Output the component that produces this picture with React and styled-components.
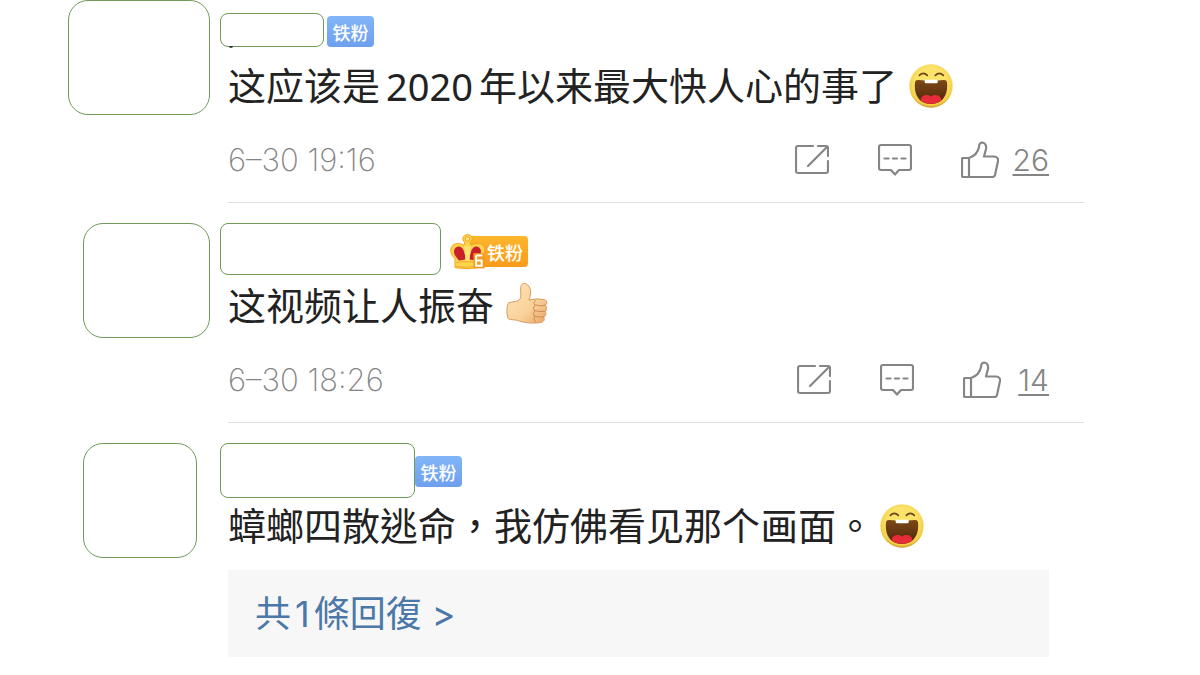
import React from "react";
import styled, { createGlobalStyle } from "styled-components";

const GlobalStyle = createGlobalStyle`
  * {
    box-sizing: border-box;
  }

  body {
    margin: 0;
    background: #fff;
    font-family: Inter, "Noto Sans CJK TC", sans-serif;
  }
`;

const List = styled.main`
  padding: 0 116px 18px 68px;
`;

const Comment = styled.article`
  display: flex;
  gap: 10px;
  padding-top: ${(props) => (props.$first ? "0" : "20px")};
`;

const AvatarColumn = styled.div`
  flex: 0 0 142px;
  padding-left: ${(props) => (props.$wide ? "0" : "15px")};
`;

const Avatar = styled.div`
  width: ${(props) => props.$width}px;
  height: 115px;
  border: 1px solid #6f9a58;
  border-radius: 20px;
`;

const Content = styled.div`
  flex: 1;
  min-width: 0;
  padding-top: ${(props) => (props.$first ? "3px" : "0")};
`;

const Header = styled.header`
  height: 57px;
  display: flex;
  align-items: center;
`;

const NameBox = styled.div`
  position: relative;
  align-self: ${(props) => (props.$compact ? "center" : "flex-start")};
  width: ${(props) => props.$width}px;
  height: ${(props) => props.$height}px;
  margin-bottom: ${(props) => (props.$compact ? "4px" : "0")};
  border: 1px solid #6f9a58;
  border-radius: 8px;
`;

const Speck = styled.span`
  position: absolute;
  left: 8px;
  top: 100%;
  width: 4px;
  height: 2px;
  border-radius: 0 0 2px 2px;
  background: #333;
`;

const Badge = styled.span`
  display: flex;
  align-items: center;
  justify-content: center;
  height: 31px;
  width: 47px;
  margin-left: ${(props) => props.$gap}px;
  border-radius: 4px;
  background: linear-gradient(#82b6f8, #6d9fee);
  color: #fff;
  font-family: "Noto Sans CJK SC", sans-serif;
  font-size: 18px;
  font-weight: 500;
  line-height: 30px;
`;

const GoldBadge = styled(Badge)`
  justify-content: flex-start;
  width: 78px;
  background: linear-gradient(#fdb62c, #f99a1c) right / 60px 100% no-repeat;

  svg {
    flex: none;
    margin-right: 1px;
  }
`;

const Body = styled.div`
  padding-left: 8px;
`;

const Message = styled.p`
  display: flex;
  align-items: center;
  height: 52px;
  margin: 0;
  color: #222;
  font-size: 38px;
  line-height: 52px;
  white-space: nowrap;

  svg {
    flex: none;
    margin-left: ${(props) => props.$gap}px;
  }
`;

const Year = styled.span`
  margin: 0 6px;
  font-family: "Noto Sans", sans-serif;
`;

const Meta = styled.footer`
  display: flex;
  align-items: center;
  justify-content: space-between;
  height: 91px;
  padding: 25px 35px 19px 0;
  border-bottom: 1px solid #e0e0e0;
`;

const Time = styled.time`
  color: #858585;
  font-size: 31px;
  font-weight: 200;
  line-height: 44px;
`;

const Actions = styled.div`
  display: flex;
  align-items: center;
  gap: 49px;
`;

const Action = styled.button`
  display: flex;
  align-items: center;
  gap: 14px;
  padding: 0;
  border: 0;
  background: none;
  color: #858585;
  font-family: inherit;
  font-size: 30px;
  font-weight: 300;
  cursor: pointer;
`;

const Count = styled.span`
  min-width: 34px;
  text-align: right;
  text-decoration: underline;
  text-decoration-thickness: 2px;
  text-underline-offset: 3px;
`;

const Replies = styled.div`
  display: flex;
  align-items: center;
  height: 87px;
  margin: 18px 35px 0 0;
  padding-left: 27px;
  background: #f7f7f7;
`;

const ReplyLink = styled.a`
  color: #4b77a9;
  font-size: 36px;
  line-height: 48px;
  text-decoration: none;
`;

const ReplyCount = styled.span`
  margin: 0 4px;
`;

const LaughIcon = () => (
  <svg width="44" height="44" viewBox="86 39 132 132" aria-label="哈哈">
    <defs>
      <radialGradient id="face" cx="50%" cy="42%" r="58%">
        <stop offset="0.6" stopColor="#fbe36a" />
        <stop offset="0.9" stopColor="#f3cc45" />
        <stop offset="1" stopColor="#c89322" />
      </radialGradient>
      <linearGradient id="mouth" x1="0" y1="0" x2="0" y2="1">
        <stop offset="0" stopColor="#7c4a16" />
        <stop offset="1" stopColor="#4d240c" />
      </linearGradient>
      <clipPath id="mouthClip">
        <path d="M104 94 Q105 86 114 87 Q152 91 190 87 Q199 86 200 94 C204 132 187 159 152 159 C117 159 100 132 104 94 Z" />
      </clipPath>
    </defs>
    <circle cx="152" cy="105" r="65" fill="url(#face)" />
    <path
      d="M104 94 Q105 86 114 87 Q152 91 190 87 Q199 86 200 94 C204 132 187 159 152 159 C117 159 100 132 104 94 Z"
      fill="url(#mouth)"
    />
    <g clipPath="url(#mouthClip)">
      <ellipse cx="139" cy="147" rx="18" ry="15" fill="#e62c38" />
      <ellipse cx="165" cy="147" rx="18" ry="15" fill="#e62c38" />
    </g>
    <path d="M133 86 H172 V94 Q172 97 168 97 H137 Q133 97 133 94 Z" fill="#fff" />
    <path
      d="M117 73 Q129 61 141 73 M165 73 Q177 61 189 73"
      fill="none"
      stroke="#6b4415"
      strokeWidth="5"
      strokeLinecap="round"
    />
  </svg>
);

const PraiseIcon = () => (
  <svg width="42" height="48" viewBox="228 184 126 144" aria-label="赞">
    <defs>
      <linearGradient id="skin" x1="0" y1="0" x2="1" y2="1">
        <stop offset="0" stopColor="#fde6b8" />
        <stop offset="0.6" stopColor="#f9d19b" />
        <stop offset="1" stopColor="#e9a466" />
      </linearGradient>
    </defs>
    <path
      d="M236 246 C246 243 258 244 266 239 C276 231 271 216 272 202 C273 189 281 186 289 190 C299 195 304 209 301 222 Q300 231 297 238 Q322 232 344 237 C352 240 352 250 346 254 C352 260 351 269 345 272 C350 278 348 286 341 289 C345 296 342 303 334 305 C308 310 280 306 262 299 C252 296 242 299 235 294 C229 281 229 258 236 246 Z"
      fill="url(#skin)"
      stroke="#d99a5d"
      strokeWidth="3"
    />
    <path
      d="M346 254 Q331 258 317 253 M345 272 Q330 275 315 270 M341 289 Q328 291 315 286 M317 240 Q307 246 315 254 Q306 263 314 271 Q306 279 314 287 Q309 297 316 304"
      fill="none"
      stroke="#cf8b50"
      strokeWidth="3"
      strokeLinecap="round"
    />
  </svg>
);

const CrownIcon = () => (
  <svg width="36" height="36" viewBox="57 43 109 109" aria-label="6">
    <path
      d="M72 118 C52 100 56 72 80 72 Q92 72 99 77 L102 70 C90 58 97 45 110 45 C123 45 130 58 118 70 L121 77 Q128 72 142 72 C166 72 168 98 150 116 L150 144 Q110 152 72 145 Z"
      fill="#ffd34c"
      stroke="#f1a51f"
      strokeWidth="3"
    />
    <path
      d="M78 116 C62 98 70 80 86 81 Q101 84 104 120 L84 123 Z M142 116 C158 98 150 80 134 81 Q119 84 116 120 L136 123 Z"
      fill="#c7202b"
    />
    <path d="M100 80 H120 L116 123 H104 Z" fill="#ffe373" />
    <circle cx="110" cy="58" r="7" fill="#ffe684" stroke="#eda124" strokeWidth="3" />
    <path d="M76 129 Q105 124 136 129 M75 141 Q105 146 135 141" fill="none" stroke="#e99a1e" strokeWidth="2" />
    <path d="M128 101 H162 V147 H128 Z" fill="#f59b1d" />
    <path d="M155 108 H139 Q136 108 136 111 V139 H153 V123 H137" fill="none" stroke="#fff" strokeWidth="6" />
  </svg>
);

const lineProps = {
  fill: "none",
  stroke: "#858585",
  strokeWidth: 2.2,
  strokeLinecap: "round",
  strokeLinejoin: "round",
};

const ShareIcon = () => (
  <svg width="34" height="36" viewBox="0 0 34 36" {...lineProps}>
    <path d="M18 4 H3 Q1 4 1 6 V29 Q1 31 3 31 H31 Q33 31 33 29 V19" />
    <path d="M23 4 H31 Q33 4 33 6 V14 M32 5 L13 24" />
  </svg>
);

const CommentIcon = () => (
  <svg width="34" height="36" viewBox="0 0 34 36" {...lineProps}>
    <path d="M3 3 H31 Q33 3 33 5 V26 Q33 28 31 28 H21 L17 32.5 L13 28 H3 Q1 28 1 26 V5 Q1 3 3 3 Z" />
    <path d="M6.5 16.5 H10.5 M15 16.5 H19 M23.5 16.5 H27.5" />
  </svg>
);

const LikeIcon = () => (
  <svg width="38" height="38" viewBox="0 0 38 38" {...lineProps}>
    <path d="M1 18 Q1 17 2 17 H8 C14 15 17 11 18 6 C18 3 19.5 1.5 21.5 1.5 C24.5 2 25.5 5 25 8 L23 15.5 H33 Q37.5 16 37 20 L34 34 Q33.5 36 31 36 H2 Q1 36 1 35 Z M8 17 V36" />
  </svg>
);

function MetaBar({ date, likes }) {
  return (
    <Meta>
      <Time>{date}</Time>
      <Actions>
        <Action type="button" aria-label="转发">
          <ShareIcon />
        </Action>
        <Action type="button" aria-label="评论">
          <CommentIcon />
        </Action>
        <Action type="button">
          <LikeIcon />
          <Count>{likes}</Count>
        </Action>
      </Actions>
    </Meta>
  );
}

function App() {
  return (
    <>
      <GlobalStyle />
      <List>
        <Comment $first>
          <AvatarColumn $wide>
            <Avatar $width={142} />
          </AvatarColumn>
          <Content $first>
            <Header>
              <NameBox $compact $width={104} $height={34}>
                <Speck />
              </NameBox>
              <Badge $gap={3}>铁粉</Badge>
            </Header>
            <Body>
              <Message $gap={12}>
                这应该是<Year>2020</Year>年以来最大快人心的事了
                <LaughIcon />
              </Message>
              <MetaBar date="6–30 19:16" likes={26} />
            </Body>
          </Content>
        </Comment>
        <Comment>
          <AvatarColumn>
            <Avatar $width={127} />
          </AvatarColumn>
          <Content>
            <Header>
              <NameBox $width={221} $height={52} />
              <GoldBadge $gap={9}>
                <CrownIcon />
                铁粉
              </GoldBadge>
            </Header>
            <Body>
              <Message $gap={12}>
                这视频让人振奋
                <PraiseIcon />
              </Message>
              <MetaBar date="6–30 18:26" likes={14} />
            </Body>
          </Content>
        </Comment>
        <Comment>
          <AvatarColumn>
            <Avatar $width={114} />
          </AvatarColumn>
          <Content>
            <Header>
              <NameBox $width={195} $height={55} />
              <Badge $gap={0}>铁粉</Badge>
            </Header>
            <Body>
              <Message $gap={6}>
                蟑螂四散逃命，我仿佛看见那个画面。
                <LaughIcon />
              </Message>
              <Replies>
                <ReplyLink href="#replies">
                  共<ReplyCount>1</ReplyCount>條回復 &gt;
                </ReplyLink>
              </Replies>
            </Body>
          </Content>
        </Comment>
      </List>
    </>
  );
}

export default App;
